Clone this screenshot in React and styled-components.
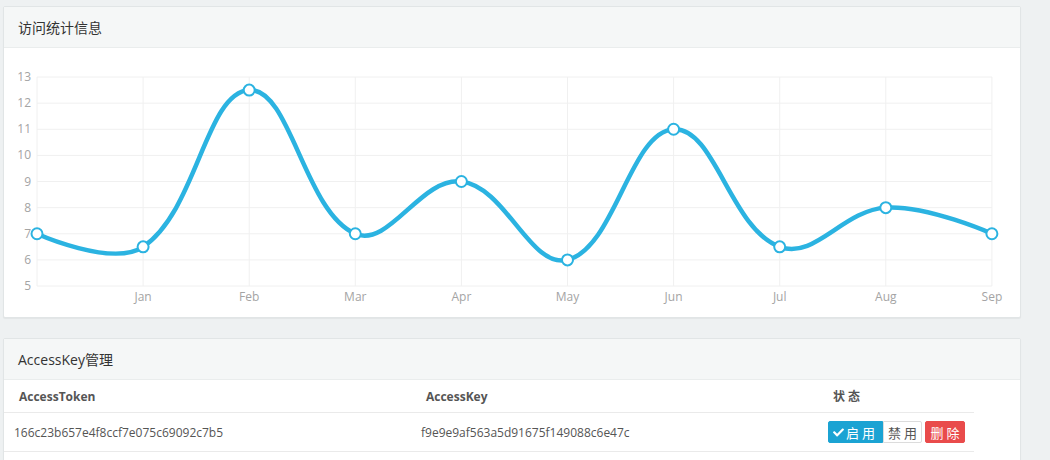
import React from "react";
import styled, { createGlobalStyle } from "styled-components";
import { FaCheck } from "react-icons/fa";

const GlobalStyle = createGlobalStyle`
  body {
    margin: 0;
    background: #eef1f2;
    font-family: "Open Sans", "Noto Sans CJK SC", sans-serif;
    color: #333;
  }
`;

const Page = styled.div`
  padding: 6px 29px 0 3px;
  display: flex;
  flex-direction: column;
  gap: 20px;
`;

const Panel = styled.section`
  background: #fff;
  border: 1px solid #e1e5e6;
  border-radius: 2px;
  box-shadow: 0 1px 1px rgba(0, 0, 0, 0.05);
`;

const PanelHeader = styled.header`
  height: 40px;
  display: flex;
  align-items: center;
  padding-left: 14px;
  background: #f5f7f7;
  border-bottom: 1px solid #eaeded;
  font-size: 14px;
  color: #333;
`;

const ChartBody = styled.div`
  height: 269px;
`;

const Table = styled.table`
  width: 970px;
  table-layout: fixed;
  border-collapse: collapse;
  font-size: 12px;
  color: #555;
`;

const Th = styled.th`
  height: 32px;
  padding: 0 15px;
  text-align: left;
  font-weight: bold;
  color: #555;
  letter-spacing: ${(p) => (p.$spaced ? "3px" : "0")};
  border-bottom: 1px solid #eaeaea;
`;

const Td = styled.td`
  height: 38px;
  padding: 0 10px;
  white-space: nowrap;
  border-bottom: 1px solid #eaeaea;
`;

const BtnGroup = styled.div`
  display: flex;
  align-items: center;
  gap: 3px;
`;

const Group = styled.div`
  display: flex;
`;

const Btn = styled.button`
  width: ${(p) => p.$w}px;
  height: 22px;
  padding: 0;
  display: flex;
  align-items: center;
  justify-content: center;
  flex-shrink: 0;
  white-space: nowrap;
  font-family: "Open Sans", "Noto Sans CJK SC", sans-serif;
  font-size: 13px;
  letter-spacing: 3px;
  text-indent: 3px;
  border: 1px solid ${(p) => p.$border};
  background: ${(p) => p.$bg};
  color: ${(p) => p.$color};
  border-radius: ${(p) => p.$radius || "2px"};
  cursor: pointer;
  svg {
    margin-right: -1px;
  }
`;

const months = ["", "Jan", "Feb", "Mar", "Apr", "May", "Jun", "Jul", "Aug", "Sep"];
const values = [7, 6.5, 12.5, 7, 9, 6, 11, 6.5, 8, 7];

const X0 = 33;
const STEP = 106.1;
const Y_TOP = 29;
const UNIT = 26.125;
const LINE = "#2bb3e1";

const px = (i) => X0 + i * STEP;
const py = (v) => Y_TOP + (13 - v) * UNIT;

// Chart.js style spline, tension 0.4
const buildPath = (pts) => {
  const ctrl = pts.map((p, i) => {
    if (i === 0 || i === pts.length - 1) return { inner: p, outer: p };
    const a = pts[i - 1];
    const b = pts[i + 1];
    const d01 = Math.hypot(p.x - a.x, p.y - a.y);
    const d12 = Math.hypot(b.x - p.x, b.y - p.y);
    const fa = (0.4 * d01) / (d01 + d12);
    const fb = (0.4 * d12) / (d01 + d12);
    return {
      inner: { x: p.x - fa * (b.x - a.x), y: p.y - fa * (b.y - a.y) },
      outer: { x: p.x + fb * (b.x - a.x), y: p.y + fb * (b.y - a.y) }
    };
  });
  let d = `M${pts[0].x},${pts[0].y}`;
  for (let i = 1; i < pts.length; i++) {
    const c1 = ctrl[i - 1].outer;
    const c2 = ctrl[i].inner;
    d += ` C${c1.x},${c1.y} ${c2.x},${c2.y} ${pts[i].x},${pts[i].y}`;
  }
  return d;
};

const LineChart = () => {
  const pts = values.map((v, i) => ({ x: px(i), y: py(v) }));
  const ticks = [5, 6, 7, 8, 9, 10, 11, 12, 13];
  return (
    <svg width="1016" height="269">
      {ticks.map((t) => (
        <line key={t} x1={X0} x2={px(9)} y1={py(t)} y2={py(t)} stroke="#f0f0f0" />
      ))}
      {months.map((m, i) => (
        <line key={i} x1={px(i)} x2={px(i)} y1={py(13)} y2={py(5)} stroke="#f0f0f0" />
      ))}
      {ticks.map((t) => (
        <text key={t} x={27} y={py(t) + 4} textAnchor="end" fontSize="12" fill="#a4a4a4" fontFamily="Open Sans, sans-serif">
          {t}
        </text>
      ))}
      {months.map((m, i) => (
        <text key={i} x={px(i)} y={253} textAnchor="middle" fontSize="12" fill="#a4a4a4" fontFamily="Open Sans, sans-serif">
          {m}
        </text>
      ))}
      <path d={buildPath(pts)} fill="none" stroke={LINE} strokeWidth="4.5" />
      {pts.map((p, i) => (
        <circle key={i} cx={p.x} cy={p.y} r="5.5" fill="#fff" stroke={LINE} strokeWidth="2" />
      ))}
    </svg>
  );
};

export default () => (
  <>
    <GlobalStyle />
    <Page>
      <Panel>
        <PanelHeader>访问统计信息</PanelHeader>
        <ChartBody>
          <LineChart />
        </ChartBody>
      </Panel>
      <Panel>
        <PanelHeader>AccessKey管理</PanelHeader>
        <Table>
          <colgroup>
            <col style={{ width: 407 }} />
            <col style={{ width: 407 }} />
            <col style={{ width: 156 }} />
          </colgroup>
          <thead>
            <tr>
              <Th>AccessToken</Th>
              <Th>AccessKey</Th>
              <Th $spaced>状态</Th>
            </tr>
          </thead>
          <tbody>
            <tr>
              <Td>166c23b657e4f8ccf7e075c69092c7b5</Td>
              <Td>f9e9e9af563a5d91675f149088c6e47c</Td>
              <Td>
                <BtnGroup>
                  <Group>
                    <Btn $w={55} $bg="#1ba3d3" $border="#1ba3d3" $color="#fff" $radius="2px 0 0 2px">
                      <FaCheck size={11} />
                      启用
                    </Btn>
                    <Btn $w={39} $bg="#fff" $border="#dcdcdc" $color="#555" $radius="0 2px 2px 0">
                      禁用
                    </Btn>
                  </Group>
                  <Btn $w={40} $bg="#e94b4b" $border="#e94b4b" $color="#fff">
                    删除
                  </Btn>
                </BtnGroup>
              </Td>
            </tr>
          </tbody>
        </Table>
        <div style={{ height: 40 }} />
      </Panel>
    </Page>
  </>
);
